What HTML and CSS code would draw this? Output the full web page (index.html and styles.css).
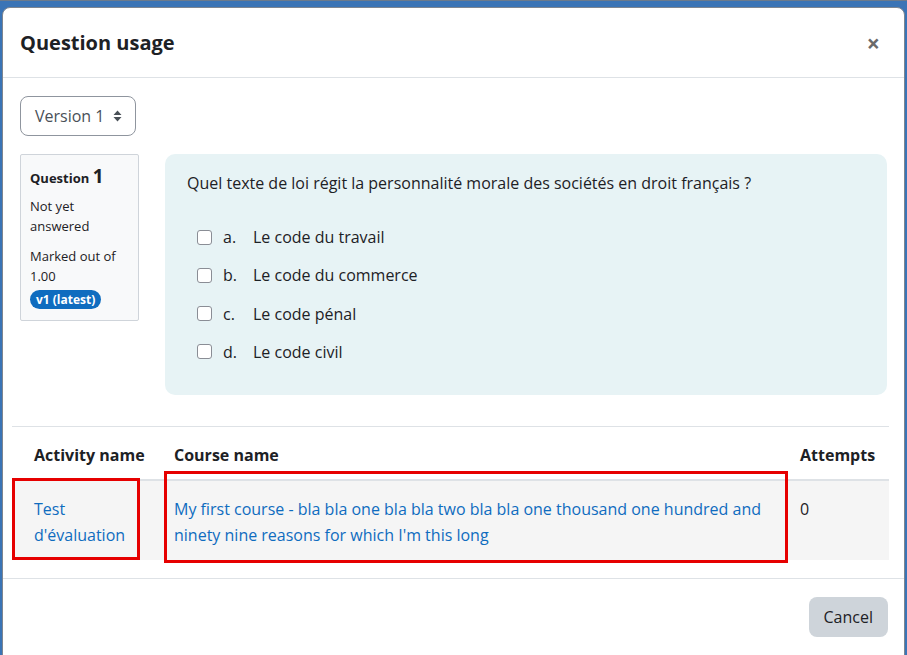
FILE: index.html
```html
<!DOCTYPE html>
<html>
<head>
<meta charset="utf-8">
<link rel="stylesheet" href="styles.css">
</head>
<body>
<div class="backdrop">
  <div class="modal">
    <div class="modal-header">
      <h5 class="modal-title">Question usage</h5>
      <span class="close">&times;</span>
    </div>
    <div class="modal-body">
      <div class="select">Version 1 <svg class="caret" width="9" height="12" viewBox="0 0 9 12"><path d="M4.5 0.5 L8.5 5 L0.5 5 Z M4.5 11.5 L8.5 7 L0.5 7 Z" fill="#495057"/></svg></div>
      <div class="question">
        <div class="info">
          <div class="qno"><span class="qword">Question</span> <span class="num">1</span></div>
          <div class="state">Not yet answered</div>
          <div class="grade">Marked out of 1.00</div>
          <span class="badge">v1 (latest)</span>
        </div>
        <div class="content">
          <div class="qtext">Quel texte de loi régit la personnalité morale des sociétés en droit français ?</div>
          <div class="answers">
            <div class="answer"><span class="cb"></span><span class="letter">a.</span><span>Le code du travail</span></div>
            <div class="answer"><span class="cb"></span><span class="letter">b.</span><span>Le code du commerce</span></div>
            <div class="answer"><span class="cb"></span><span class="letter">c.</span><span>Le code pénal</span></div>
            <div class="answer"><span class="cb"></span><span class="letter">d.</span><span>Le code civil</span></div>
          </div>
        </div>
      </div>
      <div class="tablewrap">
        <table class="usage">
          <colgroup><col class="w0"><col class="w1"><col class="w2"></colgroup>
          <thead>
            <tr><th class="c0">Activity name</th><th class="c1">Course name</th><th class="c2">Attempts</th></tr>
          </thead>
          <tbody>
            <tr>
              <td class="c0"><a>Test d'évaluation</a></td>
              <td class="c1"><a>My first course - bla bla one bla bla two bla bla one thousand one hundred and ninety nine reasons for which I'm this long</a></td>
              <td class="c2">0</td>
            </tr>
          </tbody>
        </table>
        <div class="mark mark-a"></div>
        <div class="mark mark-b"></div>
      </div>
    </div>
    <div class="modal-footer">
      <button class="btn">Cancel</button>
    </div>
  </div>
</div>
</body>
</html>
```
FILE: styles.css
```css
html, body {
  margin: 0;
  padding: 0;
  height: 100%;
  overflow: hidden;
}
body {
  background: #3a74b6;
  font-family: "Open Sans", "Noto Sans", sans-serif;
  font-size: 16px;
  color: #1d2125;
}
.backdrop {
  padding: 6px 2px 0 2px;
  height: 100%;
  box-sizing: border-box;
  border-top: 1px solid #6b7a8c;
}
.modal {
  background: #fff;
  border: 1px solid #7d8590;
  border-radius: 8px;
  height: 700px;
  box-sizing: border-box;
}
.modal-header {
  display: flex;
  align-items: center;
  justify-content: space-between;
  height: 69px;
  padding: 0 24px 0 17px;
  border-bottom: 1px solid #dee2e6;
}
.modal-title {
  margin: 0;
  font-size: 20px;
  font-weight: 700;
}
.close {
  font-size: 23px;
  font-weight: 700;
  color: #6a6a6a;
  line-height: 1;
  margin-top: 2px;
}
.modal-body {
  padding: 18px 17px 0 17px;
}
.select {
  display: inline-flex;
  align-items: center;
  gap: 9px;
  height: 40px;
  box-sizing: border-box;
  padding: 0 13px 0 14px;
  border: 1px solid #8f959e;
  border-radius: 8px;
  color: #495057;
}
.question {
  display: flex;
  align-items: flex-start;
  gap: 26px;
  margin-top: 18px;
}
.info {
  width: 119px;
  box-sizing: border-box;
  background: #f8f9fa;
  border: 1px solid #cfd4da;
  border-radius: 2px;
  padding: 11px 9px 11px 9px;
  font-size: 13px;
  line-height: 20px;
}
.qno {
  font-weight: 700;
  margin-bottom: 8px;
}
.qword { font-size: 13px; }
.num { font-size: 19px; }
.state { margin-bottom: 10px; }
.badge {
  display: inline-block;
  vertical-align: top;
  margin-top: 4px;
  background: #0f6cbf;
  color: #fff;
  font-weight: 700;
  font-size: 12px;
  line-height: 19px;
  padding: 0 6px;
  border-radius: 10px;
}
.content {
  flex: 1;
  background: #e7f3f5;
  border-radius: 10px;
  padding: 17px 22px 22px 22px;
  height: 241px;
  box-sizing: border-box;
}
.qtext {
  line-height: 24px;
  margin-bottom: 30px;
}
.answers {
  padding-left: 10px;
  display: flex;
  flex-direction: column;
  gap: 14.3px;
}
.answer {
  display: flex;
  align-items: center;
  line-height: 24px;
}
.cb {
  width: 13px;
  height: 13px;
  border: 1.5px solid #8a8d95;
  border-radius: 3px;
  background: #fff;
  margin-right: 11px;
}
.letter {
  width: 30px;
}
.tablewrap {
  position: relative;
  margin: 31px -2px 0 -8px;
  border-top: 1px solid #dee2e6;
}
.usage {
  width: 100%;
  table-layout: fixed;
  border-collapse: collapse;
  margin-top: 10px;
}
.w0 { width: 152px; }
.w1 { width: 623px; }
.usage th {
  text-align: left;
  font-weight: 700;
  padding: 7px 10px 13px 10px;
  line-height: 22px;
  border-bottom: 2px solid #dee2e6;
}
.usage td {
  background: #f5f5f5;
  vertical-align: top;
  padding: 15px 10px 12px 10px;
  line-height: 26px;
}
.usage .c0 { padding-left: 22px; }
.usage .c2 { padding-left: 13px; }
.usage a { color: #0f6cbf; }
.mark {
  position: absolute;
  border: 3px solid #e60000;
  box-sizing: border-box;
}
.mark-a { left: 0; top: 51px; width: 128px; height: 82px; }
.mark-b { left: 152px; top: 44px; width: 624px; height: 92px; }
.modal-footer {
  display: flex;
  justify-content: flex-end;
  margin-top: 18px;
  border-top: 1px solid #dee2e6;
  padding: 18px 16px;
}
.btn {
  background: #ced4da;
  border: none;
  border-radius: 8px;
  font-family: inherit;
  font-size: 16px;
  color: #1d2125;
  height: 40px;
  padding: 0 15px;
}
```
